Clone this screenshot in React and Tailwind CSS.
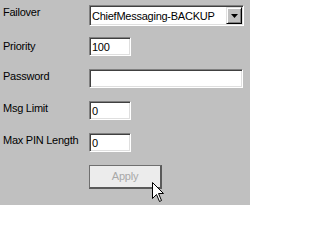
export default function App() {
  const font = { fontFamily: '"Liberation Sans", Arial, sans-serif' };
  const sunken =
    "bg-white border border-t-[#808080] border-l-[#808080] border-b-white border-r-white shadow-[inset_1px_1px_0_#404040,inset_-1px_-1px_0_#dfdfdf]";
  const txt = "text-[11px] leading-[12px] tracking-[-0.25px] text-black";
  const Label = ({ children, pt }) => (
    <div className={`w-[89px] pl-[3px] ${txt} ${pt}`}>{children}</div>
  );
  return (
    <div className="relative w-[250px] h-[205px] bg-[#c0c0c0] overflow-hidden" style={font}>
      <div className="flex flex-col">
        <div className="flex h-[32px]">
          <Label pt="pt-[6px]">Failover</Label>
          <div className={`mt-[5px] w-[155px] h-[21px] flex items-center ${sunken}`}>
            <span className={`flex-1 pl-[2px] whitespace-nowrap overflow-hidden ${txt}`}>
              ChiefMessaging-BACKUP
            </span>
            <div className="w-[16px] h-[17px] mr-[1px] bg-[#c0c0c0] border border-t-[#dfdfdf] border-l-[#dfdfdf] border-b-black border-r-black shadow-[inset_1px_1px_0_#ffffff,inset_-1px_-1px_0_#808080] flex items-center justify-center">
              <svg width="7" height="4" viewBox="0 0 7 4">
                <path d="M0 0h7L3.5 4z" fill="#000" />
              </svg>
            </div>
          </div>
        </div>
        <div className="flex h-[32px]">
          <Label pt="pt-[8px]">Priority</Label>
          <div className={`mt-[5px] w-[42px] h-[19px] flex items-center ${sunken}`}>
            <span className={`pl-[2px] ${txt}`}>100</span>
          </div>
        </div>
        <div className="flex h-[32px]">
          <Label pt="pt-[6px]">Password</Label>
          <div className={`mt-[5px] w-[154px] h-[19px] ${sunken}`} />
        </div>
        <div className="flex h-[32px]">
          <Label pt="pt-[6px]">Msg Limit</Label>
          <div className={`mt-[5px] w-[42px] h-[19px] flex items-center ${sunken}`}>
            <span className={`pl-[2px] ${txt}`}>0</span>
          </div>
        </div>
        <div className="flex h-[32px]">
          <Label pt="pt-[6px]">Max PIN Length</Label>
          <div className={`mt-[5px] w-[42px] h-[19px] flex items-center ${sunken}`}>
            <span className={`pl-[2px] ${txt}`}>0</span>
          </div>
        </div>
        <div className="flex h-[32px]">
          <div className="w-[89px]" />
          <div className="mt-[5px] w-[73px] h-[24px] bg-[#ececec] border border-[#6f6f6f] border-b-2 border-r-2 border-b-[#5a5a5a] border-r-[#5a5a5a] flex items-center justify-center text-[11px] tracking-[-0.25px] text-[#a8a8a8]">
            Apply
          </div>
        </div>
      </div>
      <svg
        className="absolute left-[152px] top-[182px]"
        width="13"
        height="21"
        viewBox="0 0 13 21"
      >
        <path
          d="M0.5 0.5 L0.5 16.5 L4.5 12.5 L7.5 19.5 L9.5 18.5 L6.5 11.5 L11.5 11.5 Z"
          fill="#fff"
          stroke="#000"
          strokeWidth="1"
        />
      </svg>
    </div>
  );
}
